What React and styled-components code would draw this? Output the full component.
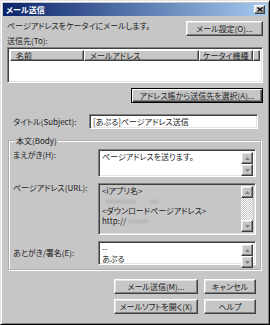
import React from 'react';
import styled, { createGlobalStyle, css } from 'styled-components';

const GlobalStyle = createGlobalStyle`
  html, body {
    margin: 0;
    padding: 0;
    background: #c6c6c6;
  }
  body {
    font-family: "Noto Sans CJK JP", "Liberation Sans", sans-serif;
    font-size: 8px;
    font-feature-settings: "palt";
    color: #1c1c1c;
  }
`;

const FACE = '#c6c6c6';

const raised = css`
  border: 1px solid;
  border-color: #fff #404040 #404040 #fff;
  box-shadow: inset -1px -1px #808080, inset 1px 1px #e4e4e4;
`;

const sunken = css`
  border: 1px solid;
  border-color: #808080 #fff #fff #808080;
  box-shadow: inset 1px 1px #404040, inset -1px -1px #e4e4e4;
`;

const Window = styled.div`
  width: 270px;
  height: 325px;
  box-sizing: border-box;
  background: ${FACE};
  border: 1px solid;
  border-color: #e4e4e4 #000 #000 #e4e4e4;
  box-shadow: inset 1px 1px #fff, inset -1px -1px #808080;
  padding: 2px;
  display: flex;
  flex-direction: column;
`;

const TitleBar = styled.div`
  height: 13px;
  flex: none;
  display: flex;
  align-items: center;
  justify-content: space-between;
  padding: 0 2px 0 3px;
  background: linear-gradient(to right, #0a246a, #a6caf0);
  color: #fff;
  font-weight: bold;
  font-size: 8px;
`;

const CloseBox = styled.div`
  width: 11px;
  height: 9px;
  box-sizing: border-box;
  background: ${FACE};
  ${raised};
  display: flex;
  align-items: center;
  justify-content: center;
`;

const Body = styled.div`
  flex: 1;
  display: flex;
  flex-direction: column;
  padding: 5px 4px 0 4px;
`;

const TopRow = styled.div`
  display: flex;
  justify-content: space-between;
  align-items: flex-start;
  line-height: 10px;
`;

const Text = styled.div`
  line-height: 10px;
  white-space: nowrap;
  padding-left: ${(p) => p.indent || 0}px;
  margin-top: ${(p) => p.top || 0}px;
`;

const Button = styled.div`
  box-sizing: border-box;
  width: ${(p) => p.w}px;
  height: 15px;
  background: ${FACE};
  ${raised};
  ${(p) =>
    p.isDefault &&
    css`
      border-color: #000;
      box-shadow: inset 1px 1px #fff, inset -1px -1px #404040, inset -2px -2px #808080;
    `}
  display: flex;
  align-items: center;
  justify-content: center;
  white-space: nowrap;
  line-height: 10px;
  margin-top: ${(p) => p.top || 0}px;
`;

const ListView = styled.div`
  box-sizing: border-box;
  height: 36px;
  margin-top: 1px;
  background: #fff;
  ${sunken};
  padding: 2px;
`;

const HeaderRow = styled.div`
  display: flex;
  height: 11px;
`;

const HeaderCell = styled.div`
  box-sizing: border-box;
  width: ${(p) => p.w}px;
  flex: ${(p) => (p.w ? 'none' : 1)};
  background: ${FACE};
  ${raised};
  box-shadow: inset -1px -1px #808080;
  line-height: 9px;
  padding-left: ${(p) => p.pad || 3}px;
  white-space: nowrap;
  overflow: hidden;
`;

const RightRow = styled.div`
  display: flex;
  justify-content: flex-end;
  gap: 6px;
  padding-right: ${(p) => p.pr || 0}px;
  margin-top: ${(p) => p.top || 0}px;
`;

const FieldRow = styled.div`
  display: flex;
  align-items: flex-start;
  margin-top: ${(p) => p.top || 0}px;
`;

const Label = styled.div`
  width: ${(p) => p.w}px;
  flex: none;
  box-sizing: border-box;
  padding-left: ${(p) => p.indent || 0}px;
  padding-top: ${(p) => p.offset || 0}px;
  line-height: 10px;
  white-space: nowrap;
`;

const Field = styled.div`
  box-sizing: border-box;
  width: ${(p) => p.w}px;
  height: ${(p) => p.h}px;
  background: ${(p) => (p.disabled ? FACE : '#fff')};
  ${sunken};
  display: flex;
`;

const FieldText = styled.div`
  flex: 1;
  padding: 2px 3px 0 3px;
  line-height: 10px;
  white-space: nowrap;
  overflow: hidden;
`;

const Blur = styled.span`
  display: inline-block;
  width: ${(p) => p.w}px;
  height: 3px;
  margin-left: ${(p) => p.ml || 0}px;
  background: #b4b4b4;
  filter: blur(1px);
  vertical-align: middle;
`;

const ScrollBar = styled.div`
  width: 12px;
  flex: none;
  margin: 2px 2px 2px 0;
  display: flex;
  flex-direction: column;
  background: ${(p) =>
    p.dither
      ? 'repeating-conic-gradient(#fff 0 25%, #c6c6c6 0 50%) 0 0 / 2px 2px'
      : '#e8e8e8'};
`;

const Arrow = styled.div`
  box-sizing: border-box;
  height: 12px;
  flex: none;
  background: ${FACE};
  ${raised};
  display: flex;
  align-items: center;
  justify-content: center;
`;

const Track = styled.div`
  flex: 1;
`;

const GroupBox = styled.fieldset`
  margin: 7px 1px 0 1px;
  padding: 3px 3px 4px 3px;
  border: 2px groove #fff;
  display: flex;
  flex-direction: column;
  gap: 6px;
`;

const Legend = styled.legend`
  padding: 0 1px;
  margin-left: 2px;
  line-height: 10px;
`;

const ArrowIcon = ({ down, gray }) => (
  <svg width="5" height="3" viewBox="0 0 5 3">
    <path
      d={down ? 'M0 0H5L2.5 3Z' : 'M0 3H5L2.5 0Z'}
      fill={gray ? '#808080' : '#000'}
    />
  </svg>
);

const Scroller = ({ dither, gray }) => (
  <ScrollBar dither={dither}>
    <Arrow>
      <ArrowIcon gray={gray} />
    </Arrow>
    <Track />
    <Arrow>
      <ArrowIcon down gray={gray} />
    </Arrow>
  </ScrollBar>
);

const App = () => (
  <>
    <GlobalStyle />
    <Window>
      <TitleBar>
        <span>メール送信</span>
        <CloseBox>
          <svg width="6" height="5" viewBox="0 0 6 5">
            <path d="M0.5 0.5L5.5 4.5M5.5 0.5L0.5 4.5" stroke="#000" strokeWidth="1.3" />
          </svg>
        </CloseBox>
      </TitleBar>
      <Body>
        <TopRow>
          <Text>ページアドレスをケータイにメールします。</Text>
          <Button w={77}>メール設定(O)...</Button>
        </TopRow>
        <Text>送信先(To):</Text>
        <ListView>
          <HeaderRow>
            <HeaderCell w={74} pad={5}>名前</HeaderCell>
            <HeaderCell w={115} pad={5}>メールアドレス</HeaderCell>
            <HeaderCell w={54} pad={3}>ケータイ機種</HeaderCell>
            <HeaderCell />
          </HeaderRow>
        </ListView>
        <RightRow top={5}>
          <Button w={132} isDefault>アドレス帳から送信先を選択(A)...</Button>
        </RightRow>
        <FieldRow top={11}>
          <Label w={82} indent={6} offset={3}>タイトル(Subject):</Label>
          <Field w={169} h={15}>
            <FieldText>[あぷる]ページアドレス送信</FieldText>
          </Field>
        </FieldRow>
        <GroupBox>
          <Legend>本文(Body)</Legend>
          <FieldRow>
            <Label w={85} offset={1}>まえがき(H):</Label>
            <Field w={158} h={28}>
              <FieldText>ページアドレスを送ります。</FieldText>
              <Scroller gray />
            </Field>
          </FieldRow>
          <FieldRow>
            <Label w={85} offset={0}>ページアドレス(URL):</Label>
            <Field w={158} h={52} disabled>
              <FieldText>
                &lt;iアプリ名&gt;
                <br />
                <Blur w={30} ml={4} />
                <Blur w={8} ml={14} />
                <br />
                &lt;ダウンロードページアドレス&gt;
                <br />
                http://<Blur w={20} ml={2} />
              </FieldText>
              <Scroller dither gray />
            </Field>
          </FieldRow>
          <FieldRow>
            <Label w={85} offset={7}>あとがき/署名(E):</Label>
            <Field w={158} h={24}>
              <FieldText>
                --
                <br />
                あぷる
              </FieldText>
              <Scroller gray />
            </Field>
          </FieldRow>
        </GroupBox>
        <RightRow top={8} pr={7}>
          <Button w={84}>メール送信(M)...</Button>
          <Button w={52}>キャンセル</Button>
        </RightRow>
        <RightRow top={5} pr={7}>
          <Button w={84}>メールソフトを開く(X)</Button>
          <Button w={52}>ヘルプ</Button>
        </RightRow>
      </Body>
    </Window>
  </>
);

export default App;
